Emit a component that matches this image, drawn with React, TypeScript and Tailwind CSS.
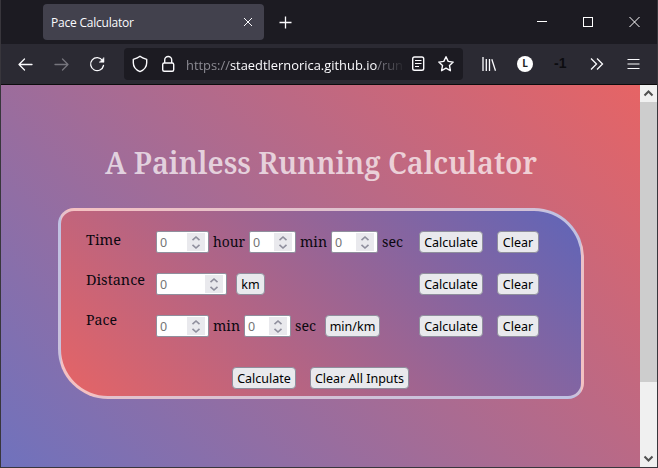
import React from "react";

const serif = "font-['Noto_Serif','Droid_Serif','Liberation_Serif',serif]";

function Label({ text, w, className = "" }: { text: string; w: number; className?: string }) {
  return (
    <svg width={w} height="22" className={`shrink-0 overflow-visible ${serif} ${className}`}>
      <text x="0" y="16" fontSize="15" fill="#0b0810" textLength={w} lengthAdjust="spacingAndGlyphs">{text}</text>
    </svg>
  );
}

function Btn({ text, className }: { text: string; className: string }) {
  return (
    <button className={`h-[22px] shrink-0 whitespace-nowrap rounded-[4px] border border-[#8f8f9d] bg-[#e9e9ed] pt-px text-center font-['Noto_Sans',sans-serif] text-[12.5px] leading-[19px] text-black ${className}`}>
      {text}
    </button>
  );
}

function NumberInput({ className }: { className: string }) {
  return (
    <div className={`flex h-[22px] shrink-0 items-center justify-between rounded-[2px] border border-[#8f8f9d] bg-white pl-[3px] pr-[3px] ${className}`}>
      <span className="pt-px font-['Noto_Sans',sans-serif] text-[12.5px] leading-[19px] text-[#757575]">0</span>
      <svg width="18" height="18" className="bg-[#e9e9ed]" fill="none" stroke="#8f8f9d" strokeWidth="1.6">
        <path d="M5.5 7.2 9 4l3.5 3.2M5.5 11.8 9 15l3.5-3.2" />
      </svg>
    </div>
  );
}

function Row({ label, w, lift, children }: { label: string; w: number; lift: string; children: React.ReactNode }) {
  return (
    <div className="flex h-[22px]">
      <div className={`w-[70px] ${lift}`}><Label text={label} w={w} /></div>
      <div className="flex w-[263px]">{children}</div>
      <Btn text="Calculate" className="w-[64px]" />
      <Btn text="Clear" className="ml-[14px] w-[42px]" />
    </div>
  );
}

export default function App() {
  return (
    <div className="flex h-[468px] w-[658px] flex-col overflow-hidden border-x border-b border-[#38363c] bg-[#1c1b22] font-['Open_Sans','Noto_Sans',sans-serif]">
      <header className="flex h-[44px] shrink-0 items-center">
        <div className="ml-[42px] flex h-[36px] w-[221px] items-center justify-between rounded-[4px] bg-[#42414d] pl-2 pr-[11px]">
          <span className="pt-px text-[12px] tracking-[-0.22px] text-[#fbfbfe]">Pace Calculator</span>
          <svg width="10" height="10" stroke="#fbfbfe" strokeWidth="1"><path d="m1 1 8 8m0-8L1 9" /></svg>
        </div>
        <svg width="13" height="13" className="ml-[15px]" stroke="#fbfbfe" strokeWidth="1.3"><path d="M6.5 0.5v12M.5 6.5h12" /></svg>
        <svg width="103" height="12" className="ml-[245px]" fill="none" stroke="#fff" shapeRendering="crispEdges">
          <path d="M0 5.5h10M46.5 1.5h9v9h-9z" />
          <path d="m92.5 1 10 10m0-10-10 10" shapeRendering="auto" />
        </svg>
      </header>
      <nav className="flex h-[41px] shrink-0 items-center border-b border-[#0c0c0d] bg-[#2b2a33] pb-px">
        <svg width="88" height="18" className="ml-[17px]" fill="none" stroke="#fbfbfe" strokeWidth="1.3" strokeLinecap="round" strokeLinejoin="round">
          <path d="M14 9.5H1m5.5-5.5L1 9.5 6.5 15" />
          <path d="M37 9.5h13M44.5 4 50 9.5 44.5 15" stroke="#76757d" />
          <path d="M84.5 5.5A6.5 6.5 0 1 0 85.500 10.500" />
          <path d="M86 2.800v4.500h-4.500z" fill="#fbfbfe" strokeWidth=".5" />
        </svg>
        <div className="ml-[18px] flex h-[32px] w-[339px] items-center rounded-[4px] bg-[#1c1b22]">
          <svg width="44" height="18" className="ml-[8px] shrink-0" fill="none" stroke="#fbfbfe" strokeWidth="1.4" strokeLinejoin="round">
            <path d="M8 1.3C6.2 2.8 3.8 3.600 1.300 4.300v3.500C1.300 12 4 15 8 16.600c4-1.600 6.700-4.600 6.700-8.800V4.300C12.200 3.600 9.800 2.800 8 1.300z" />
            <rect x="30.700" y="8" width="11" height="8.300" rx="1.500" />
            <path d="M32.700 8V5a3.500 3.500 0 0 1 7 0v3" />
          </svg>
          <div className="ml-[10px] w-[220px] shrink-0 text-[13.5px] leading-[22px] [mask-image:linear-gradient(to_right,black_190px,transparent_220px)]">
            <svg width="220" height="22" className="overflow-visible">
              <text x="0" y="17" textLength="217" lengthAdjust="spacingAndGlyphs" fill="#8c8b93">https://<tspan fill="#fbfbfe">staedtlernorica.github.io</tspan>/run</text>
            </svg>
          </div>
          <svg width="46" height="18" className="ml-[5px] shrink-0" fill="none" stroke="#fbfbfe" strokeWidth="1.4" strokeLinejoin="round">
            <rect x="1.700" y="2" width="11" height="13.200" rx="1.800" />
            <path d="M4 5.500h6.500M4 8.500h6.500M4 11.500h4" strokeWidth="1.200" />
            <path d="m35 1.700 2.200 4.700 5 .7-3.700 3.500.9 5.100-4.400-2.500-4.400 2.500.9-5.100-3.700-3.500 5-.7z" />
          </svg>
        </div>
        <svg width="16" height="16" className="ml-[19px]" stroke="#fbfbfe" strokeWidth="1.3"><path d="M1 1v14M4.300 3v12M7.500 3v12M9.800 3.200l3.700 11.600" /></svg>
        <div className="ml-[19px] flex size-[16px] items-center justify-center rounded-full bg-white text-[10px] font-bold text-[#222]">L</div>
        <div className="ml-[21px] w-[16px] font-['Liberation_Sans',sans-serif] text-[14px] font-bold text-[#0c0c10]">-1</div>
        <svg width="14" height="14" className="ml-[20px]" fill="none" stroke="#fbfbfe" strokeWidth="1.3"><path d="m1 1.500 5.500 5.500L1 12.500m6-11L12.500 7 7 12.500" /></svg>
        <svg width="13" height="12" className="ml-[23px]" stroke="#fbfbfe" strokeWidth="1.2"><path d="M.5 1.500h12M.5 6h12M.5 10.500h12" /></svg>
      </nav>
      <div className="flex min-h-0 flex-1">
        <main className="h-[393px] w-[639px] shrink-0 bg-[linear-gradient(45deg,#6e72be,#e66465)] pt-[57px]">
          <h1 className={`ml-[104px] h-[66px] ${serif}`}>
            <svg width="434" height="44" className="overflow-visible"><text x="0" y="32" fontSize="30" fontWeight="600" fill="#fff" fillOpacity=".7" textLength="432" lengthAdjust="spacingAndGlyphs">A Painless Running Calculator</text></svg>
          </h1>
          <section className="ml-[57px] flex h-[191px] w-[526px] flex-col gap-[20px] rounded-[16px_50px_16px_50px] border-[3px] border-white/60 bg-[linear-gradient(45deg,#e66465,#5f65b8)] pl-[25px] pt-[20px]">
            <Row label="Time" w={35} lift="-mt-[2px]">
              <NumberInput className="w-[53px]" /><Label text="hour" w={32} className="ml-[4px]" />
              <NumberInput className="ml-[4px] w-[47px]" /><Label text="min" w={27} className="ml-[4px]" />
              <NumberInput className="ml-[4px] w-[47px]" /><Label text="sec" w={21} className="ml-[4px]" />
            </Row>
            <Row label="Distance" w={59} lift="-mt-[4px]">
              <NumberInput className="w-[71px]" /><Btn text="km" className="ml-[9px] w-[29px]" />
            </Row>
            <Row label="Pace" w={31} lift="-mt-[6px]">
              <NumberInput className="w-[53px]" /><Label text="min" w={27} className="ml-[4px]" />
              <NumberInput className="ml-[4px] w-[47px]" /><Label text="sec" w={21} className="ml-[4px]" />
              <Btn text="min/km" className="ml-[9px] w-[55px]" />
            </Row>
            <div className="ml-[146px] mt-[10px] flex gap-[14px]">
              <Btn text="Calculate" className="w-[64px]" />
              <Btn text="Clear All Inputs" className="w-[99px]" />
            </div>
          </section>
        </main>
        <aside className="flex w-[17px] flex-col items-center justify-between bg-[#f0f0f0]">
          <svg width="17" height="17" fill="none" stroke="#505050" strokeWidth="2"><path d="m4.500 10.500 4-4 4 4" /></svg>
          <div className="mb-auto h-[280px] w-full bg-[#cdcdcd]" />
          <svg width="17" height="17" fill="none" stroke="#505050" strokeWidth="2"><path d="m4.500 6.500 4 4 4-4" /></svg>
        </aside>
      </div>
    </div>
  );
}
